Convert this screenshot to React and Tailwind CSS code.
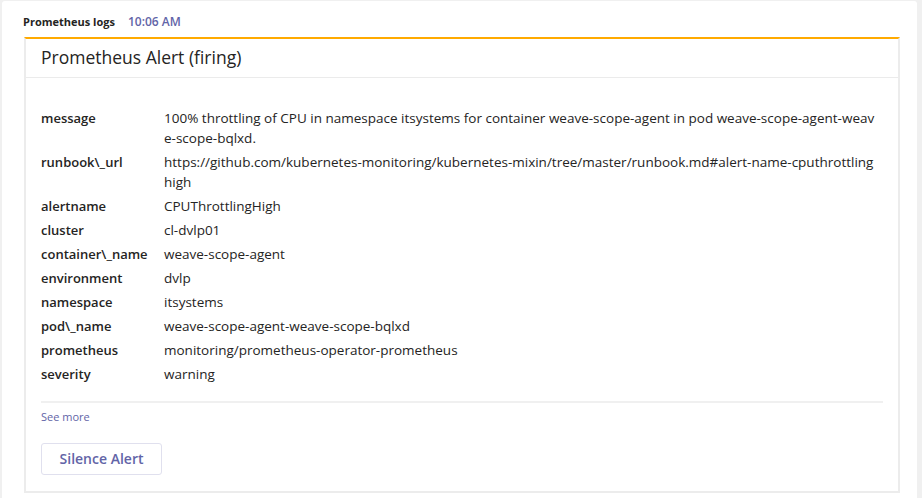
import React from 'react';

const rows = [
  ['message', '100% throttling of CPU in namespace itsystems for container weave-scope-agent in pod weave-scope-agent-weave-scope-bqlxd.'],
  ['runbook\\_url', 'https://github.com/kubernetes-monitoring/kubernetes-mixin/tree/master/runbook.md#alert-name-cputhrottlinghigh'],
  ['alertname', 'CPUThrottlingHigh'],
  ['cluster', 'cl-dvlp01'],
  ['container\\_name', 'weave-scope-agent'],
  ['environment', 'dvlp'],
  ['namespace', 'itsystems'],
  ['pod\\_name', 'weave-scope-agent-weave-scope-bqlxd'],
  ['prometheus', 'monitoring/prometheus-operator-prometheus'],
  ['severity', 'warning'],
];

export default function App() {
  return (
    <div className="w-[922px] h-[498px] bg-[#f0f0f0] pl-[2px] pr-[5px] pt-[1px] font-['Open_Sans',sans-serif] text-[#252423] overflow-hidden">
      <div className="bg-white h-full rounded-t-[3px] pl-[22px] pr-[17px]">
        {/* header line */}
        <div className="flex items-baseline gap-[13px] pt-[12px] h-[36px] -ml-[1px]">
          <span className="text-[11px] font-bold text-[#252423]">Prometheus logs</span>
          <span className="text-[12px] font-semibold text-[#6264a7]">10:06 AM</span>
        </div>

        {/* card */}
        <div className="border-t-2 border-t-[#ffaa00] border-x-2 border-b-2 border-x-[#ececec] border-b-[#ececec] bg-white">
          <div className="h-[39px] flex items-center px-[15px] border-b border-[#ebebeb]">
            <h1 className="text-[17.5px] leading-none text-[#252423]">Prometheus Alert (firing)</h1>
          </div>

          <div className="px-[15px] pt-[30px] pb-[16px]">
            <div className="flex flex-col gap-[4px]">
              {rows.map(([k, v]) => (
                <div key={k} className="flex text-[13.5px] leading-[20px]">
                  <div className="w-[123px] shrink-0 font-semibold text-[13px]">{k}</div>
                  <div className="w-[717px] break-all">{v}</div>
                </div>
              ))}
            </div>

            <div className="mt-[17px] h-[2px] bg-[#f0f0f0]" />
            <div className="mt-[6px] text-[11px] text-[#6264a7]">See more</div>
            <button className="mt-[17px] w-[121px] h-[32px] border border-[#e0e0ee] rounded-[3px] text-[14px] font-semibold text-[#6264a7]">
              Silence Alert
            </button>
          </div>
        </div>
      </div>
    </div>
  );
}
